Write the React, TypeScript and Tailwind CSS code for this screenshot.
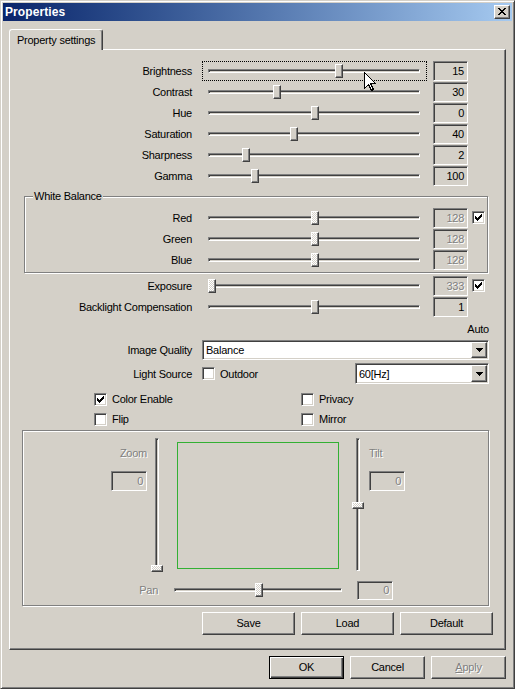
import React from "react";

const FONT = "font-['Liberation_Sans',Arial,sans-serif]";
const SUNKEN =
  "border border-t-[#808080] border-l-[#808080] border-r-white border-b-white shadow-[inset_1px_1px_0_#404040,inset_-1px_-1px_0_#d4d0c8]";
const RAISED =
  "border border-t-white border-l-white border-r-[#404040] border-b-[#404040] shadow-[inset_-1px_-1px_0_#808080]";
const DIS_TEXT = "text-[#808080] [text-shadow:1px_1px_0_#fff]";
const DITHER = "bg-[repeating-conic-gradient(#fff_0_25%,#d4d0c8_0_50%)] bg-[length:2px_2px]";

const CHECK = ["......x", ".....xx", "x...xxx", "xx.xxx.", "xxxxx..", ".xxx...", "..x...."];
const ARROW = ["xxxxxxx", ".xxxxx.", "..xxx..", "...x..."];
const CLOSE = ["xx....xx", ".xx..xx.", "..xxxx..", "...xx...", "..xxxx..", ".xx..xx.", "xx....xx"];

function Pixels({ rows, color = "#000" }: { rows: string[]; color?: string }) {
  return (
    <svg width={rows[0].length} height={rows.length} shapeRendering="crispEdges" className="block">
      {rows.flatMap((r, y) =>
        r.split("").map((c, x) =>
          c === "x" ? <rect key={`${x}-${y}`} x={x} y={y} width={1} height={1} fill={color} /> : null
        )
      )}
    </svg>
  );
}

function Check({ checked }: { checked?: boolean }) {
  return (
    <div className={`flex h-[13px] w-[13px] shrink-0 items-center justify-center bg-white ${SUNKEN}`}>
      {checked && <Pixels rows={CHECK} />}
    </div>
  );
}

function Edit({ value, disabled, className = "" }: { value: string; disabled?: boolean; className?: string }) {
  return (
    <div
      className={`flex shrink-0 items-center justify-end bg-[#d4d0c8] pr-[3px] pt-[1px] ${SUNKEN} ${
        disabled ? DIS_TEXT : "text-black"
      } ${className}`}
    >
      {value}
    </div>
  );
}

function Track({ pos, disabled }: { pos: number; disabled?: boolean }) {
  return (
    <div className={`relative h-[4px] w-full ${SUNKEN}`}>
      <div
        className={`absolute top-[-6px] h-[14px] w-[8px] ${RAISED} ${disabled ? DITHER : "bg-[#d4d0c8]"}`}
        style={{ left: pos }}
      />
    </div>
  );
}

type RowProps = {
  label: string;
  value: string;
  pos: number;
  labelW?: string;
  disabled?: boolean;
  check?: boolean;
  focus?: boolean;
};

function SliderRow({ label, value, pos, labelW = "w-[182px]", disabled, check, focus }: RowProps) {
  return (
    <div className="flex h-[21px] items-center">
      <div className={`${labelW} shrink-0 pt-[1px] text-right`}>{label}</div>
      <div
        className={`ml-[10px] flex h-[20px] w-[225px] shrink-0 items-center border pl-[5px] pr-[6px] ${
          focus ? "border-dotted border-black" : "border-transparent"
        }`}
      >
        <Track pos={pos} disabled={disabled} />
      </div>
      <Edit value={value} disabled={disabled} className="ml-[6px] h-[20px] w-[35px]" />
      {check !== undefined && (
        <div className="ml-[4px]">
          <Check checked={check} />
        </div>
      )}
    </div>
  );
}

function Combo({ text, className = "" }: { text: string; className?: string }) {
  return (
    <div className={`flex items-center bg-white p-[1px] ${SUNKEN} ${className}`}>
      <span className="flex-1 pl-[2px] pt-[1px]">{text}</span>
      <div className={`flex h-full w-[16px] items-center justify-center bg-[#d4d0c8] ${RAISED}`}>
        <Pixels rows={ARROW} />
      </div>
    </div>
  );
}

function Btn({
  children,
  className = "",
  def,
}: {
  children: React.ReactNode;
  className?: string;
  def?: boolean;
}) {
  const frame = def
    ? "border border-black shadow-[inset_1px_1px_0_#fff,inset_-1px_-1px_0_#404040,inset_-2px_-2px_0_#808080]"
    : RAISED;
  return (
    <div className={`flex h-[23px] shrink-0 items-center justify-center bg-[#d4d0c8] ${frame} ${className}`}>
      {children}
    </div>
  );
}

function VSlider({ pos }: { pos: number }) {
  return (
    <div className="relative flex h-[134px] w-[12px] shrink-0 justify-center">
      <div className={`h-[133px] w-[4px] ${SUNKEN}`} />
      <div className={`absolute left-0 h-[7px] w-[12px] ${RAISED} ${DITHER}`} style={{ top: pos }} />
    </div>
  );
}

function CheckLabel({ checked, text }: { checked?: boolean; text: string }) {
  return (
    <div className="flex items-center">
      <Check checked={checked} />
      <span className="ml-[5px] pt-[1px]">{text}</span>
    </div>
  );
}

export default function App() {
  return (
    <div
      className={`relative h-[689px] w-[515px] overflow-hidden border border-t-[#d4d0c8] border-l-[#d4d0c8] border-r-[#404040] border-b-[#404040] bg-[#d4d0c8] p-[2px] text-[11px] leading-[13px] tracking-[-0.25px] text-black shadow-[inset_1px_1px_0_#fff,inset_-1px_-1px_0_#808080] ${FONT}`}
    >
      {/* Title bar */}
      <div className="flex h-[18px] items-center justify-between bg-linear-to-r from-[#0a246a] to-[#a6caf0] pl-[2px] pr-[2px]">
        <span className="text-[12px] font-bold tracking-[0.1px] text-white">Properties</span>
        <div className={`flex h-[14px] w-[16px] items-start bg-[#d4d0c8] pl-[3px] pt-[2px] ${RAISED}`}>
          <Pixels rows={CLOSE} />
        </div>
      </div>

      <div className="flex flex-col px-[6px]">
        {/* Tab */}
        <div className="relative z-10 mt-[8px] h-[21px] w-[94px] rounded-t-[3px] border-l border-r border-t border-l-white border-r-[#404040] border-t-white bg-[#d4d0c8] pl-[7px] pt-[4px] shadow-[inset_-1px_0_0_#808080]">
          Property settings
        </div>

        {/* Tab panel */}
        <div className="-mt-[1px] flex h-[601px] w-[497px] flex-col border border-b-[#404040] border-l-white border-r-[#404040] border-t-white shadow-[inset_-1px_-1px_0_#808080]">
          <div className="mt-[10px]">
            <SliderRow label="Brightness" value="15" pos={126} focus />
            <SliderRow label="Contrast" value="30" pos={64} />
            <SliderRow label="Hue" value="0" pos={102} />
            <SliderRow label="Saturation" value="40" pos={81} />
            <SliderRow label="Sharpness" value="2" pos={33} />
            <SliderRow label="Gamma" value="100" pos={42} />
          </div>

          {/* White Balance */}
          <div className="relative ml-[14px] mt-[10px] h-[77px] w-[464px] border border-[#808080] pb-[2px] pt-[10px] shadow-[inset_1px_1px_0_#fff,1px_1px_0_#fff]">
            <span className="absolute left-[8px] top-[-7px] bg-[#d4d0c8] px-[1px]">White Balance</span>
            <SliderRow label="Red" value="128" pos={102} labelW="w-[167px]" disabled check />
            <SliderRow label="Green" value="128" pos={102} labelW="w-[167px]" disabled />
            <SliderRow label="Blue" value="128" pos={102} labelW="w-[167px]" disabled />
          </div>

          <div className="mt-[2px]">
            <SliderRow label="Exposure" value="333" pos={-1} disabled check />
            <SliderRow label="Backlight Compensation" value="1" pos={102} />
          </div>

          <div className="mt-[5px] w-[479px] pt-[1px] text-right">Auto</div>

          <div className="mt-[4px] flex h-[20px] items-center">
            <div className="w-[182px] shrink-0 pt-[1px] text-right">Image Quality</div>
            <Combo text="Balance" className="ml-[10px] h-[20px] w-[287px]" />
          </div>

          <div className="mt-[3px] flex h-[21px] w-[479px] items-center">
            <div className="w-[182px] shrink-0 pt-[1px] text-right">Light Source</div>
            <div className="ml-[10px]">
              <CheckLabel text="Outdoor" />
            </div>
            <Combo text="60[Hz]" className="ml-auto h-[21px] w-[134px]" />
          </div>

          <div className="mt-[5px] flex h-[20px] items-center pl-[84px]">
            <div className="w-[207px]">
              <CheckLabel checked text="Color Enable" />
            </div>
            <CheckLabel text="Privacy" />
          </div>
          <div className="flex h-[20px] items-center pl-[84px]">
            <div className="w-[207px]">
              <CheckLabel text="Flip" />
            </div>
            <CheckLabel text="Mirror" />
          </div>

          {/* Pan / Tilt */}
          <div className="ml-[12px] mt-[1px] flex h-[176px] w-[467px] flex-col border border-[#808080] shadow-[inset_1px_1px_0_#fff,1px_1px_0_#fff]">
            <div className="flex pt-[7px]">
              <div className="flex w-[124px] shrink-0 flex-col items-end">
                <div className={`mt-[9px] ${DIS_TEXT}`}>Zoom</div>
                <Edit value="0" disabled className="mt-[11px] h-[20px] w-[36px]" />
              </div>
              <div className="ml-[4px]">
                <VSlider pos={127} />
              </div>
              <div className="ml-[14px] mt-[4px] h-[127px] w-[162px] shrink-0 border border-[#33b033]" />
              <div className="ml-[13px]">
                <VSlider pos={64} />
              </div>
              <div className="ml-[5px] flex flex-col items-start">
                <div className={`mt-[9px] ${DIS_TEXT}`}>Tilt</div>
                <Edit value="0" disabled className="mt-[11px] h-[20px] w-[36px]" />
              </div>
            </div>
            <div className="mt-[8px] flex h-[20px] items-center">
              <div className={`w-[135px] shrink-0 pt-[1px] text-right ${DIS_TEXT}`}>Pan</div>
              <div className="ml-[16px] flex h-[14px] w-[168px] shrink-0 items-center">
                <div className={`relative h-[4px] w-full ${SUNKEN}`}>
                  <div className={`absolute top-[-6px] h-[14px] w-[8px] ${RAISED} ${DITHER}`} style={{ left: 80 }} />
                </div>
              </div>
              <Edit value="0" disabled className="ml-[15px] h-[19px] w-[36px]" />
            </div>
          </div>

          <div className="mt-[6px] flex gap-[6px] pl-[192px]">
            <Btn className="w-[93px]">Save</Btn>
            <Btn className="w-[93px]">Load</Btn>
            <Btn className="w-[93px]">Default</Btn>
          </div>
        </div>

        {/* Dialog buttons */}
        <div className="mt-[6px] flex justify-end gap-[6px]">
          <Btn className="w-[75px]" def>
            OK
          </Btn>
          <Btn className="w-[75px]">Cancel</Btn>
          <Btn className={`w-[75px] ${DIS_TEXT}`}>
            <span>
              <span className="underline">A</span>pply
            </span>
          </Btn>
        </div>
      </div>

      {/* Mouse pointer */}
      <svg className="absolute left-[363px] top-[71px]" width="13" height="20" shapeRendering="crispEdges">
        <path d="M0.5 0.5 V16.5 L4.5 12.5 L7.5 18.5 L9.5 17.5 L6.5 11.5 H11.5 Z" fill="#fff" stroke="#000" />
      </svg>
    </div>
  );
}
